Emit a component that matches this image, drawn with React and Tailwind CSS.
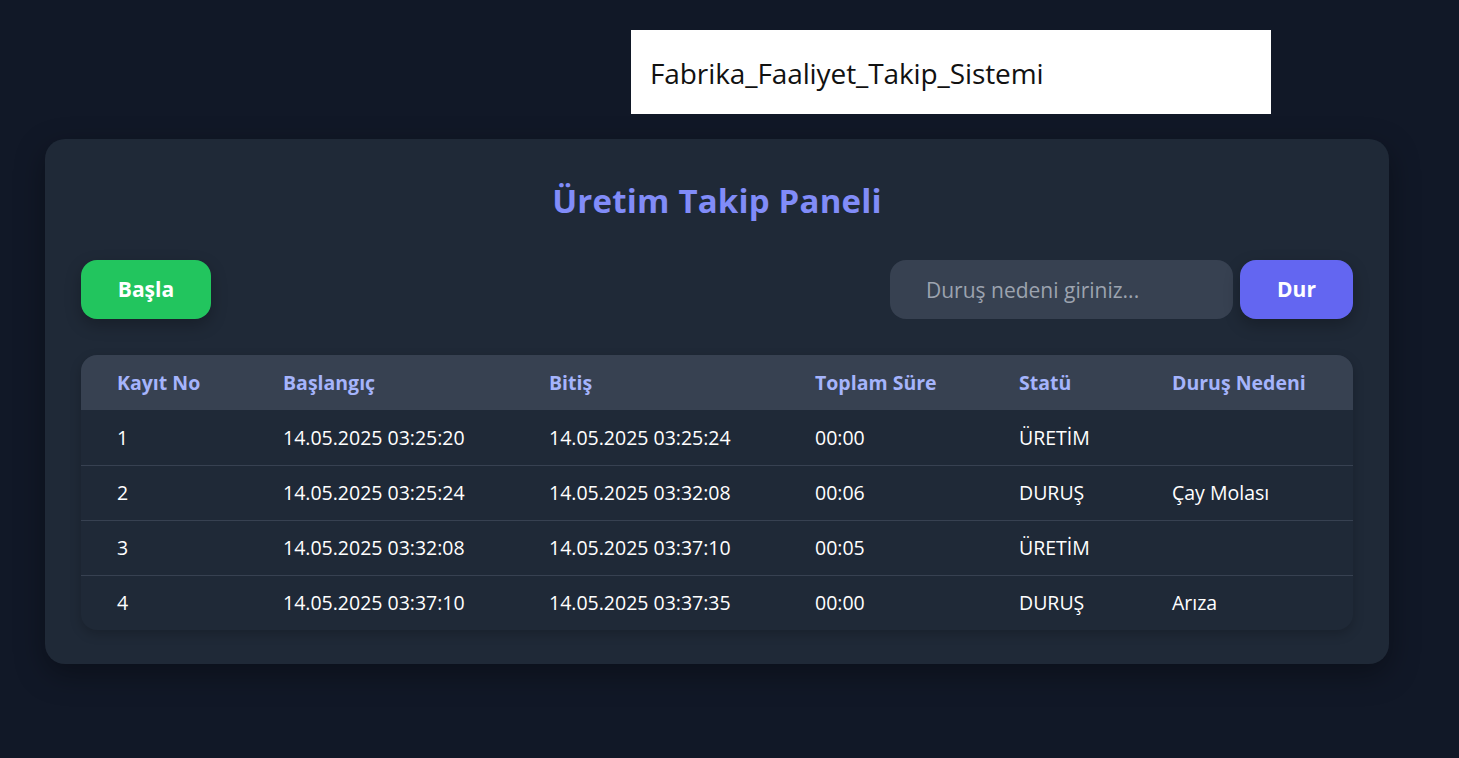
import React from 'react';

const rows = [
  { no: 1, start: '14.05.2025 03:25:20', end: '14.05.2025 03:25:24', total: '00:00', status: 'ÜRETİM', reason: '' },
  { no: 2, start: '14.05.2025 03:25:24', end: '14.05.2025 03:32:08', total: '00:06', status: 'DURUŞ', reason: 'Çay Molası' },
  { no: 3, start: '14.05.2025 03:32:08', end: '14.05.2025 03:37:10', total: '00:05', status: 'ÜRETİM', reason: '' },
  { no: 4, start: '14.05.2025 03:37:10', end: '14.05.2025 03:37:35', total: '00:00', status: 'DURUŞ', reason: 'Arıza' },
];

function App() {
  return (
    <div className="min-h-screen w-full bg-[#111827] font-['Open_Sans',sans-serif] text-white pt-[30px]">
      <div className="ml-[631px] w-[640px] h-[84px] bg-white flex items-center px-[19px]">
        <span className="text-[28px] text-[#111] tracking-[-0.1px] pt-[2px]">Fabrika_Faaliyet_Takip_Sistemi</span>
      </div>

      <div className="ml-[45px] mt-[25px] w-[1344px] bg-[#1f2937] rounded-[20px] px-[36px] pt-[36px] pb-[34px] shadow-[0_10px_30px_rgba(0,0,0,0.35)]">
        <h1 className="text-center text-[33px] font-bold text-[#818cf8] leading-[52px] mb-[33px] tracking-[0.2px]">Üretim Takip Paneli</h1>

        <div className="flex items-center justify-between mb-[36px]">
          <button className="w-[130px] h-[59px] rounded-[16px] bg-[#22c55e] text-white text-[21px] font-bold shadow-[0_6px_16px_rgba(0,0,0,0.25)]">Başla</button>
          <div className="flex items-center gap-[7px]">
            <input
              placeholder="Duruş nedeni giriniz..."
              className="w-[343px] h-[59px] rounded-[16px] bg-[#374151] px-[36px] text-[21px] text-white placeholder:text-[#9ca3af] outline-none"
            />
            <button className="w-[113px] h-[59px] rounded-[16px] bg-[#6366f1] text-white text-[21px] font-bold shadow-[0_6px_16px_rgba(0,0,0,0.25)]">Dur</button>
          </div>
        </div>

        <div className="rounded-[16px] overflow-hidden shadow-[0_4px_12px_rgba(0,0,0,0.2)]">
          <table className="w-full table-fixed border-collapse text-left">
            <thead>
              <tr className="bg-[#374151] h-[55px] text-[#a5b4fc] text-[19.5px] font-bold">
                <th className="pl-[36px] w-[166px]">Kayıt No</th>
                <th className="pl-[36px] w-[266px]">Başlangıç</th>
                <th className="pl-[36px] w-[266px]">Bitiş</th>
                <th className="pl-[36px] w-[204px]">Toplam Süre</th>
                <th className="pl-[36px] w-[153px]">Statü</th>
                <th className="pl-[36px]">Duruş Nedeni</th>
              </tr>
            </thead>
            <tbody className="text-[19.5px]">
              {rows.map((r, i) => (
                <tr key={r.no} className={`h-[55px] ${i < rows.length - 1 ? 'border-b border-[#374151]' : ''}`}>
                  <td className="pl-[36px]">{r.no}</td>
                  <td className="pl-[36px]">{r.start}</td>
                  <td className="pl-[36px]">{r.end}</td>
                  <td className="pl-[36px]">{r.total}</td>
                  <td className="pl-[36px]">{r.status}</td>
                  <td className="pl-[36px]">{r.reason}</td>
                </tr>
              ))}
            </tbody>
          </table>
        </div>
      </div>
    </div>
  );
}

export default App;
